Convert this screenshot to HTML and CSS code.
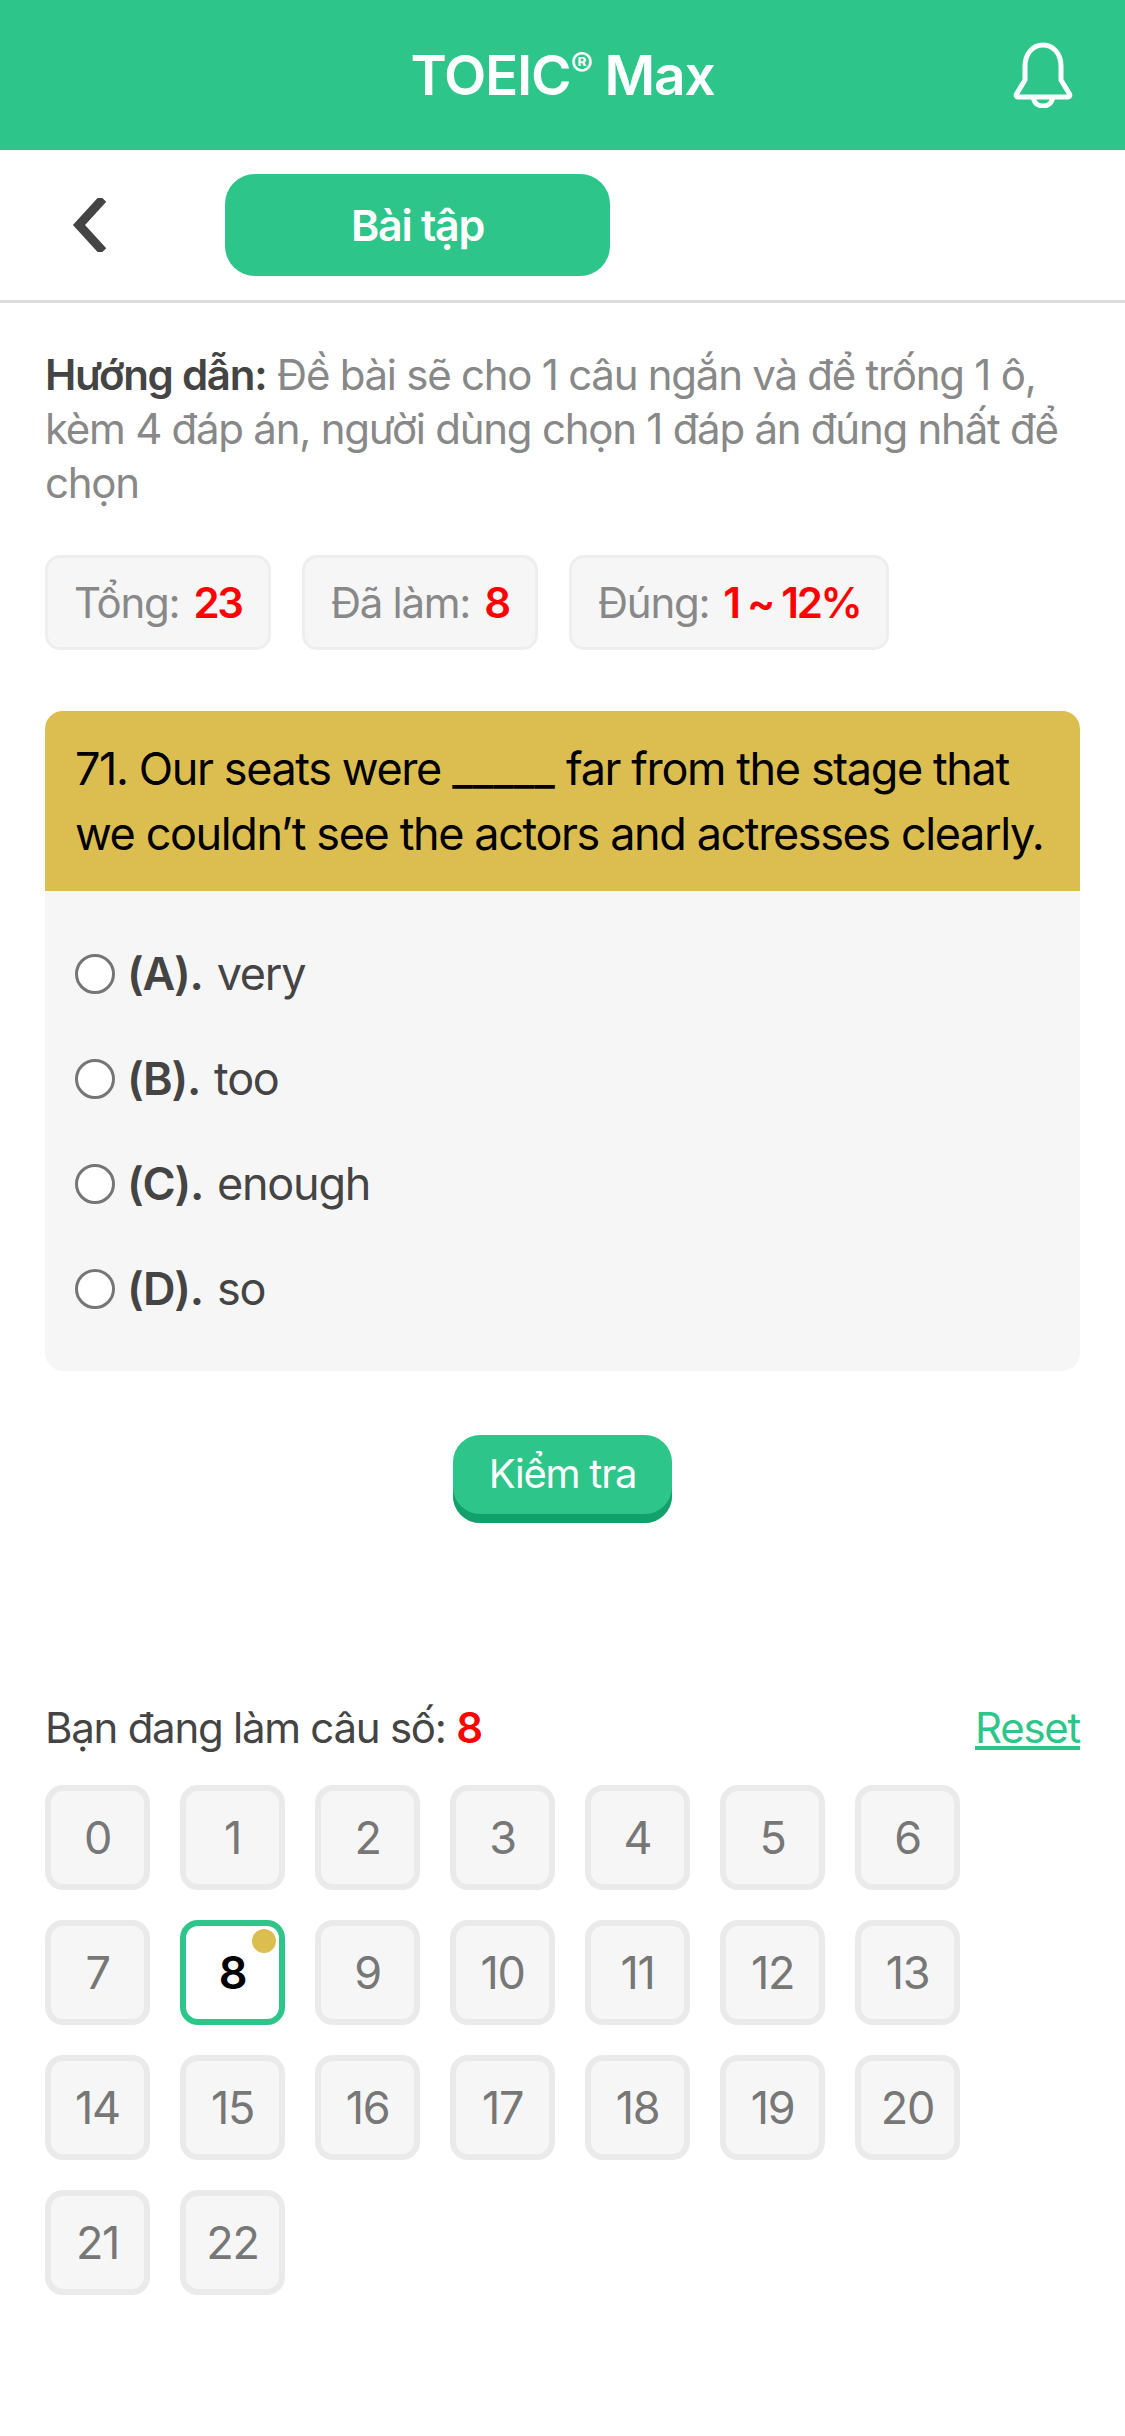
FILE: index.html
```html
<!DOCTYPE html>
<html lang="vi">
<head>
<meta charset="utf-8">
<title>TOEIC Max</title>
<link rel="stylesheet" href="styles.css">
</head>
<body>
<header class="topbar">
  <span></span>
  <h1 class="title">TOEIC<sup class="reg">®</sup> Max</h1>
  <svg class="bell" viewBox="0 0 60 66" width="60" height="66" aria-hidden="true">
    <path d="M12 31V24C12 12 19.500 3 30 3C40.500 3 48 12 48 24V38L56.500 52C57.300 53.500 56.500 55 54.500 55H5.500C3.500 55 2.700 53.500 3.500 52L12 38Z" fill="none" stroke="#fff" stroke-width="5" stroke-linejoin="round"/>
    <path d="M20.500 56C21 61 25 64 30 64C35 64 39 61 39.500 56" fill="none" stroke="#fff" stroke-width="5"/>
  </svg>
</header>
<nav class="subbar">
  <svg class="back" viewBox="0 0 34 54" width="34" height="54" aria-hidden="true">
    <path d="M28 4L7 27L28 50" fill="none" stroke="#444" stroke-width="9" stroke-linecap="square" stroke-linejoin="miter"/>
  </svg>
  <div class="tab">Bài tập</div>
</nav>
<main class="content">
  <p class="guide"><strong>Hướng dẫn:</strong> Đề bài sẽ cho 1 câu ngắn và để trống 1 ô, kèm 4 đáp án, người dùng chọn 1 đáp án đúng nhất để chọn</p>
  <div class="stats">
    <div class="stat">Tổng: <b>23</b></div>
    <div class="stat">Đã làm: <b>8</b></div>
    <div class="stat">Đúng: <b>1 ~ 12%</b></div>
  </div>
  <section class="card">
    <div class="question">71. Our seats were <span class="blank">_____</span> far from the stage that we couldn’t see the actors and actresses clearly.</div>
    <div class="options">
      <label class="option"><span class="radio"></span><b>(A).</b> very</label>
      <label class="option"><span class="radio"></span><b>(B).</b> too</label>
      <label class="option"><span class="radio"></span><b>(C).</b> enough</label>
      <label class="option"><span class="radio"></span><b>(D).</b> so</label>
    </div>
  </section>
  <div class="actions"><button class="check">Kiểm tra</button></div>
  <div class="progress">
    <div>Bạn đang làm câu số: <b>8</b></div>
    <a class="reset" href="#">Reset</a>
  </div>
  <div class="grid">
    <div class="cell">0</div><div class="cell">1</div><div class="cell">2</div><div class="cell">3</div><div class="cell">4</div><div class="cell">5</div><div class="cell">6</div>
    <div class="cell">7</div><div class="cell active">8<span class="dot"></span></div><div class="cell">9</div><div class="cell">10</div><div class="cell">11</div><div class="cell">12</div><div class="cell">13</div>
    <div class="cell">14</div><div class="cell">15</div><div class="cell">16</div><div class="cell">17</div><div class="cell">18</div><div class="cell">19</div><div class="cell">20</div>
    <div class="cell">21</div><div class="cell">22</div>
  </div>
</main>
</body>
</html>
```
FILE: styles.css
```css
* { box-sizing: border-box; }
html, body { margin: 0; padding: 0; }
body {
  width: 1125px;
  min-height: 2436px;
  background: #fff;
  font-family: "Inter", "Noto Sans", sans-serif;
  font-size: 42px;
  letter-spacing: -0.03em;
  color: #444;
}
.topbar {
  height: 150px;
  background: #2dc58a;
  display: grid;
  grid-template-columns: 1fr auto 1fr;
  align-items: center;
}
.title {
  margin: 0;
  color: #fff;
  font-size: 55px;
  font-weight: 600;
  line-height: 1;
  letter-spacing: -0.022em;
}
.reg { font-size: 34px; line-height: 0; vertical-align: 18px; }
.bell { justify-self: end; margin-right: 52px; }
.subbar {
  height: 153px;
  border-bottom: 3px solid #dcdcdc;
  display: flex;
  align-items: center;
  padding-left: 72px;
}
.tab {
  margin-left: 119px;
  width: 385px;
  height: 102px;
  border-radius: 30px;
  background: #2dc58a;
  color: #fff;
  font-weight: 600;
  font-size: 43px;
  display: flex;
  align-items: center;
  justify-content: center;
}
.content { padding: 45px 45px 0; }
.guide {
  margin: 0;
  line-height: 54px;
  color: #888;
}
.guide strong { color: #444; font-weight: 600; }
.stats { display: flex; gap: 31px; margin-top: 45px; }
.stat {
  height: 95px;
  padding: 0 26px;
  display: flex;
  align-items: center;
  gap: 14px;
  color: #888;
  background: #f6f6f6;
  border: 3px solid #eee;
  border-radius: 15px;
}
.stat b { color: #f00; font-weight: 600; letter-spacing: -0.055em; }
.card {
  margin-top: 61px;
  border-radius: 18px;
  overflow: hidden;
  background: #f6f6f6;
}
.question {
  background: #dcbe50;
  color: #000;
  font-size: 45px;
  font-weight: 400;
  line-height: 65px;
  letter-spacing: -0.031em;
  padding: 25px 20px 25px 30px;
}
.blank { letter-spacing: 0; }
.options { padding: 30px 30px 30px; }
.option {
  height: 105px;
  display: flex;
  align-items: center;
  gap: 14px;
  font-size: 45px;
}
.option b { font-weight: 600; }
.radio {
  width: 40px;
  height: 40px;
  margin-right: -2px;
  border-radius: 50%;
  border: 3px solid #757575;
  background: #fff;
}
.actions { display: flex; justify-content: center; margin-top: 64px; }
.check {
  width: 219px;
  height: 88px;
  padding: 0 0 12px;
  border: 0;
  border-radius: 27px;
  background: #2dc58a;
  box-shadow: inset 0 -9px 0 #12a06c;
  color: #fff;
  font-family: inherit;
  font-size: 40px;
  letter-spacing: inherit;
  font-weight: 400;
}
.progress {
  margin-top: 178px;
  display: flex;
  justify-content: space-between;
  line-height: 54px;
}
.progress b { color: #f00; font-weight: 600; }
.reset { color: #2dc58a; text-decoration: underline; }
.grid {
  margin-top: 30px;
  display: grid;
  grid-template-columns: repeat(7, 105px);
  grid-auto-rows: 105px;
  gap: 30px;
}
.cell {
  position: relative;
  display: flex;
  align-items: center;
  justify-content: center;
  font-size: 45px;
  color: #777;
  background: #f6f6f6;
  border: 6px solid #eaeaea;
  border-radius: 18px;
}
.cell.active {
  background: #fff;
  border-color: #2dc58a;
  color: #000;
  font-weight: 600;
}
.dot {
  position: absolute;
  top: 3px;
  right: 3px;
  width: 24px;
  height: 24px;
  border-radius: 50%;
  background: #dcbe50;
}
```
